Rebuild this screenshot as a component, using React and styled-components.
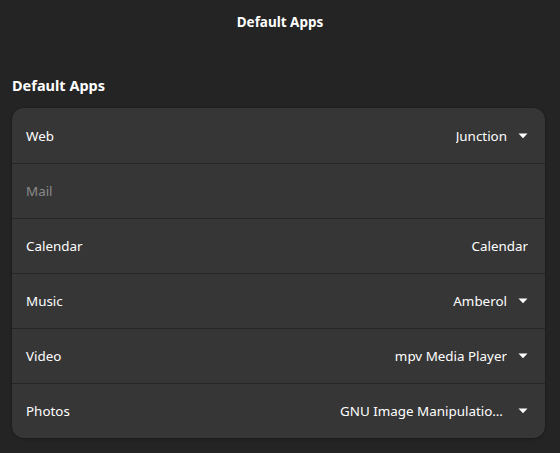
import React from 'react';
import styled, { createGlobalStyle } from 'styled-components';

const GlobalStyle = createGlobalStyle`
  html, body {
    margin: 0;
    padding: 0;
    background: #242424;
  }
  body {
    font-family: "Noto Sans", "Open Sans", sans-serif;
    color: #ffffff;
  }
`;

const Window = styled.div`
  width: 560px;
  height: 453px;
  background: #242424;
  overflow: hidden;
  display: flex;
  flex-direction: column;
`;

const HeaderBar = styled.header`
  height: 44px;
  display: flex;
  align-items: center;
  justify-content: center;
  font-size: 13.5px;
  font-weight: 700;
  color: #ffffff;
`;

const Content = styled.main`
  padding: 32px 15px 0 12px;
`;

const SectionTitle = styled.h2`
  margin: 0 0 13px 0;
  font-size: 14.5px;
  font-weight: 700;
  line-height: 19px;
  color: #ffffff;
`;

const Card = styled.div`
  background: #363636;
  border-radius: 12px;
  box-shadow: 0 0 0 1px rgba(0, 0, 0, 0.06), 0 1px 3px rgba(0, 0, 0, 0.25);
  overflow: hidden;
`;

const Row = styled.div`
  height: 55px;
  box-sizing: border-box;
  display: flex;
  align-items: center;
  justify-content: space-between;
  padding: 0 17px 0 14px;
  font-size: 13.4px;
  color: ${(p) => (p.$dim ? '#8a8a8a' : '#ffffff')};
  & + & {
    border-top: 1px solid #262626;
  }
`;

const Value = styled.div`
  display: flex;
  align-items: center;
  gap: 11px;
  color: #ffffff;
`;

const ValueText = styled.span`
  max-width: 167px;
  white-space: nowrap;
  overflow: hidden;
  text-overflow: ellipsis;
`;

const Arrow = () => (
  <svg width="10" height="6" viewBox="0 0 10 6" style={{ flex: 'none' }}>
    <path d="M0.5 0.5 L9.5 0.5 L5 5.2 Z" fill="#ffffff" />
  </svg>
);

const rows = [
  { label: 'Web', value: 'Junction', arrow: true },
  { label: 'Mail', dim: true },
  { label: 'Calendar', value: 'Calendar' },
  { label: 'Music', value: 'Amberol', arrow: true },
  { label: 'Video', value: 'mpv Media Player', arrow: true },
  { label: 'Photos', value: 'GNU Image Manipulation Program', arrow: true },
];

export default function App() {
  return (
    <Window>
      <GlobalStyle />
      <HeaderBar>Default Apps</HeaderBar>
      <Content>
        <SectionTitle>Default Apps</SectionTitle>
        <Card>
          {rows.map((r) => (
            <Row key={r.label} $dim={r.dim}>
              <span>{r.label}</span>
              {r.value && (
                <Value>
                  <ValueText>{r.value}</ValueText>
                  {r.arrow && <Arrow />}
                </Value>
              )}
            </Row>
          ))}
        </Card>
      </Content>
    </Window>
  );
}
